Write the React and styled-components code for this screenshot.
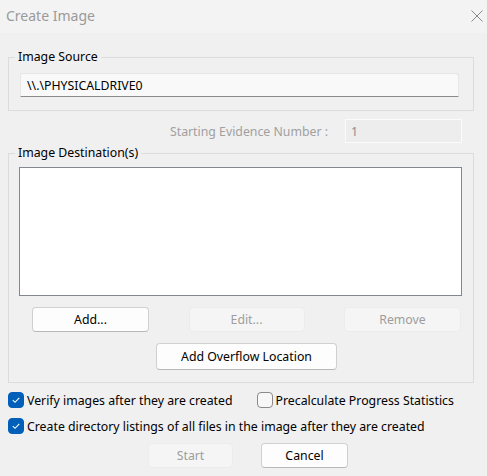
import React from "react";
import styled, { createGlobalStyle } from "styled-components";

const Global = createGlobalStyle`
  html, body { margin: 0; padding: 0; background: #f0f0f0; }
  * { box-sizing: border-box; }
`;

const Dialog = styled.div`
  width: 487px;
  height: 476px;
  background: #f0f0f0;
  font-family: "Noto Sans", "Open Sans", sans-serif;
  font-size: 12.3px;
  color: #000;
  display: flex;
  flex-direction: column;
  overflow: hidden;
`;

const TitleBar = styled.div`
  height: 33px;
  background: #f3f3f3;
  display: flex;
  align-items: center;
  justify-content: space-between;
  padding: 0 4px 2px 6px;
`;

const Title = styled.div`
  font-size: 14px;
  color: #9a9a9a;
`;

const CloseBtn = styled.div`
  width: 12px;
  height: 12px;
  display: flex;
`;

const Body = styled.div`
  display: flex;
  flex-direction: column;
  padding: 24px 13px 0 8px;
`;

const Group = styled.div`
  position: relative;
  border: 1px solid #dcdcdc;
  height: ${(p) => p.$h}px;
  padding: ${(p) => p.$pad};
`;

const Legend = styled.span`
  position: absolute;
  top: -9px;
  left: 6px;
  padding: 0 3px;
  background: #f0f0f0;
  line-height: 16px;
`;

const SourceField = styled.div`
  height: 24px;
  background: #f9f9f9;
  border: 1px solid #e6e6e6;
  border-bottom: 1px solid #8a8a8a;
  border-radius: 3px 3px 0 0;
  display: flex;
  align-items: center;
  padding-left: 6px;
`;

const EvidenceRow = styled.div`
  display: flex;
  align-items: center;
  justify-content: flex-end;
  height: 24px;
  margin: 8px 0 10px;
  padding-right: 12px;
  gap: 17px;
`;

const EvidenceLabel = styled.span`
  color: #a0a0a0;
`;

const EvidenceBox = styled.div`
  width: 117px;
  height: 24px;
  border: 1px solid #fbfbfb;
  background: #ededed;
  color: #8c8c8c;
  display: flex;
  align-items: center;
  padding-left: 5px;
`;

const ListBox = styled.div`
  height: 129px;
  background: #fff;
  border: 1px solid #828790;
`;

const ButtonRow = styled.div`
  display: flex;
  justify-content: space-between;
  padding: 0 1px 0 13px;
  margin-top: 11px;
`;

const Button = styled.button`
  font-family: inherit;
  font-size: 12.3px;
  width: ${(p) => p.$w}px;
  height: ${(p) => p.$h || 25}px;
  background: ${(p) => (p.disabled ? "#f5f5f5" : "#fdfdfd")};
  color: ${(p) => (p.disabled ? "#9d9d9d" : "#000")};
  border: 1px solid ${(p) => (p.disabled ? "#ececec" : "#d0d0d0")};
  border-bottom-color: ${(p) => (p.disabled ? "#ececec" : "#b8b8b8")};
  border-radius: 4px;
  padding: 0;
  display: flex;
  align-items: center;
  justify-content: center;
`;

const CenterRow = styled.div`
  display: flex;
  justify-content: center;
  gap: ${(p) => p.$gap || 0}px;
  margin-top: ${(p) => p.$mt}px;
  padding-left: ${(p) => p.$pl || 0}px;
`;

const CheckRow = styled.div`
  display: flex;
  align-items: center;
  height: 16px;
  margin-top: ${(p) => p.$mt}px;
`;

const CheckItem = styled.label`
  display: flex;
  align-items: center;
  gap: 3px;
  margin-right: ${(p) => p.$mr || 0}px;
`;

const Box = styled.span`
  width: 16px;
  height: 16px;
  border-radius: 4px;
  display: flex;
  align-items: center;
  justify-content: center;
  background: ${(p) => (p.$on ? "#005fb8" : "#f7f7f7")};
  border: 1px solid ${(p) => (p.$on ? "#005fb8" : "#8a8a8a")};
`;

const Check = ({ on }) => (
  <Box $on={on}>
    {on && (
      <svg width="10" height="10" viewBox="0 0 10 10">
        <path d="M1.8 5.2 L4 7.3 L8.3 2.8" fill="none" stroke="#fff" strokeWidth="1.1" />
      </svg>
    )}
  </Box>
);

export default function App() {
  return (
    <>
      <Global />
      <Dialog>
        <TitleBar>
          <Title>Create Image</Title>
          <CloseBtn>
            <svg width="12" height="12" viewBox="0 0 12 12">
              <path d="M0.5 0.5 L11.5 11.5 M11.5 0.5 L0.5 11.5" stroke="#8a8a8a" strokeWidth="1" />
            </svg>
          </CloseBtn>
        </TitleBar>
        <Body>
          <Group $h={54} $pad="15px 14px 0 11px">
            <Legend>Image Source</Legend>
            <SourceField>\\.\PHYSICALDRIVE0</SourceField>
          </Group>
          <EvidenceRow>
            <EvidenceLabel>Starting Evidence Number :</EvidenceLabel>
            <EvidenceBox>1</EvidenceBox>
          </EvidenceRow>
          <Group $h={230} $pad="13px 11px 0 10px">
            <Legend>Image Destination(s)</Legend>
            <ListBox />
            <ButtonRow>
              <Button $w={117}>Add...</Button>
              <Button $w={116} disabled>Edit...</Button>
              <Button $w={117} disabled>Remove</Button>
            </ButtonRow>
            <CenterRow $mt={11} $pl={12}>
              <Button $w={181} $h={27}>Add Overflow Location</Button>
            </CenterRow>
          </Group>
          <CheckRow $mt={9}>
            <CheckItem $mr={24}>
              <Check on />
              Verify images after they are created
            </CheckItem>
            <CheckItem>
              <Check />
              Precalculate Progress Statistics
            </CheckItem>
          </CheckRow>
          <CheckRow $mt={10}>
            <CheckItem>
              <Check on />
              Create directory listings of all files in the image after they are created
            </CheckItem>
          </CheckRow>
          <CenterRow $mt={9} $gap={28} $pl={14}>
            <Button $w={85} disabled>Start</Button>
            <Button $w={87}>Cancel</Button>
          </CenterRow>
        </Body>
      </Dialog>
    </>
  );
}
